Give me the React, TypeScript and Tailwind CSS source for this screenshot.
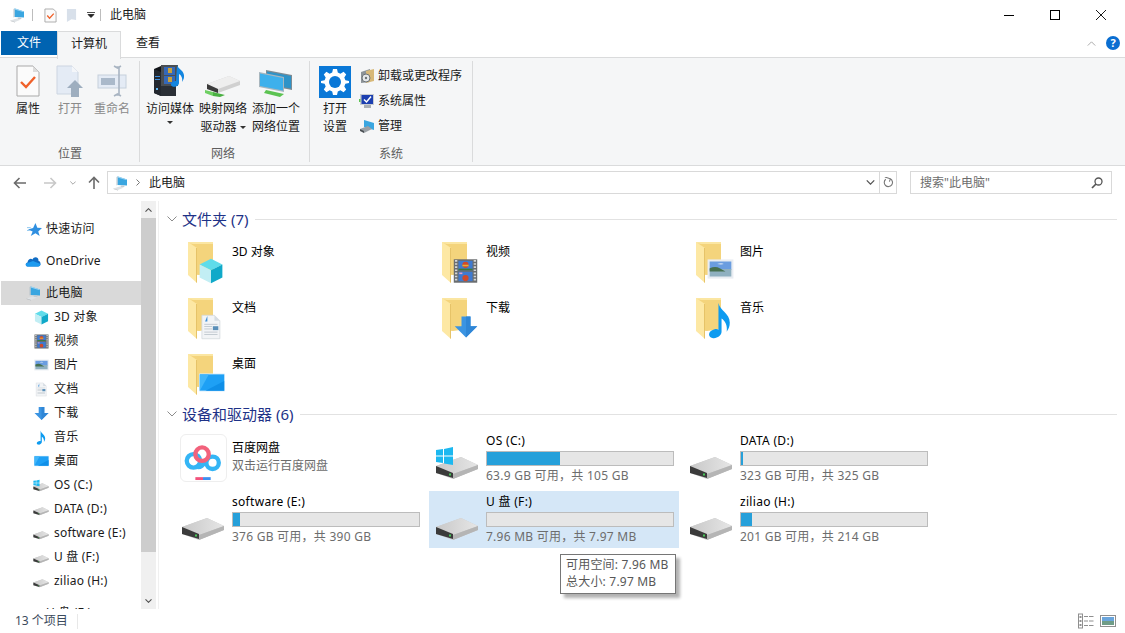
import React from 'react';

type P = React.SVGProps<SVGSVGElement>;

const FONT = "font-['Noto_Sans','Noto_Sans_CJK_SC',sans-serif]";

/* ---------- drawn icons ---------- */

const Computer = (p: P) => (
  <svg viewBox="0 0 32 32" {...p}>
    <path d="M9 3 L28 9 V21 L9 20 Z" fill="#3aa6e0" />
    <path d="M9 3 L11 3 L28 9 L26 10 L9 5 Z" fill="#9bd3f2" />
    <path d="M7 4 L9 3 V20 L7 21 Z" fill="#b8c4cc" />
    <path d="M16 21 L22 21 L23 24 L15 24 Z" fill="#c4ccd2" />
    <path d="M1 27 L13 23 L22 25 L10 30 Z" fill="#dfe3e6" />
    <path d="M1 27 L10 30 V31 L1 28 Z" fill="#aeb4b9" />
  </svg>
);

const Cube = (p: P) => (
  <svg viewBox="0 0 32 32" {...p}>
    <path d="M16 1 L30 8 L16 15 L2 8 Z" fill="#5fdcea" />
    <path d="M2 8 L16 15 V31 L2 24 Z" fill="#c2eef4" />
    <path d="M16 15 L30 8 V24 L16 31 Z" fill="#10a9c9" />
  </svg>
);

const Film = (p: P) => (
  <svg viewBox="0 0 32 32" {...p}>
    <rect x="1" y="1" width="30" height="30" fill="#6a6d6f" />
    <path d="M4 2 V30 M28 2 V30" stroke="#d4d6d8" strokeWidth="3" strokeDasharray="2 2" />
    <rect x="7" y="3" width="18" height="12" fill="#3f7ad0" />
    <rect x="7" y="17" width="18" height="12" fill="#3f7ad0" />
    <circle cx="16" cy="8" r="4" fill="#cf4a2a" />
    <rect x="12" y="8" width="8" height="2" fill="#e0b23a" />
    <rect x="7" y="13" width="18" height="2" fill="#3d7a3a" />
    <circle cx="16" cy="25" r="4" fill="#cf4a2a" />
    <rect x="8" y="18" width="4" height="2" fill="#e8a0c0" />
  </svg>
);

const Picture = (p: P) => (
  <svg viewBox="0 0 32 24" {...p}>
    <rect x="0.5" y="0.5" width="31" height="23" fill="#e9edf2" />
    <rect x="3" y="3" width="26" height="10" fill="#6a9de0" />
    <rect x="3" y="12" width="26" height="9" fill="#8fb0c0" />
    <path d="M3 11 Q10 8 15 11 L22 15 H3 Z" fill="#46704f" />
    <path d="M12 6 Q17 4 20 6 Q17 7 12 6" fill="#dfeaf7" />
  </svg>
);

const Doc = (p: P) => (
  <svg viewBox="0 0 32 32" {...p}>
    <path d="M5 1 H21 L28 8 V31 H5 Z" fill="#f2f4f6" stroke="#d4d8dc" />
    <path d="M21 1 V8 H28 Z" fill="#d6dde3" />
    <path d="M9 9 L12 2 V9 Z" fill="#3f8fd8" />
    <rect x="8" y="12" width="17" height="1" fill="#b8c0c8" />
    <rect x="8" y="15" width="10" height="1" fill="#b8c0c8" />
    <rect x="19" y="15" width="7" height="5" fill="#5a8fb8" />
    <rect x="8" y="18" width="10" height="1" fill="#b8c0c8" />
    <rect x="8" y="22" width="17" height="1" fill="#b8c0c8" />
    <rect x="8" y="25" width="17" height="1" fill="#b8c0c8" />
  </svg>
);

const Download = (p: P) => (
  <svg viewBox="0 0 32 32" {...p}>
    <path d="M10 2 H22 V15 H31 L16 30 L1 15 H10 Z" fill="#3b94e2" />
    <path d="M16 2 H22 V15 H31 L16 30 Z" fill="#2f86d6" />
  </svg>
);

const Music = (p: P) => (
  <svg viewBox="0 0 22 36" {...p}>
    <path d="M10 1 C11 8 21 11 21 20 C21 24 20 26 18 29 C19 22 16 18 13 16 V29 C13 33 8 36 4 35 C0 34 0 30 3 28 C6 26 9 26 10 27 Z" fill="#0d9bf0" />
  </svg>
);

const Desktop = (p: P) => (
  <svg viewBox="0 0 32 22" {...p}>
    <rect x="0" y="0" width="32" height="22" rx="1" fill="#d8eefc" />
    <rect x="1" y="1" width="30" height="20" fill="#1ea0f5" />
    <path d="M1 21 L12 1 H1 Z" fill="#41b6fa" />
    <path d="M8 21 L31 9 V21 Z" fill="#0f8fe8" />
  </svg>
);

const Star = (p: P) => (
  <svg viewBox="0 0 16 16" {...p}>
    <path d="M9 1 L11 6 L16 6.5 L12 10 L13.5 15 L9 12 L4 15 L6 10 L1 8 L6.5 6.5 Z" fill="#2f8fe0" />
    <path d="M0 6 H4 M0 9 H3" stroke="#8cc4ee" />
  </svg>
);

const Cloud = (p: P) => (
  <svg viewBox="0 0 16 11" {...p}>
    <path d="M3 10.5 C0.5 10.5 0 7 2.5 6.5 C3 3 6 2 7.5 3.5 C9 0 14 1 13.5 5 C16 5 16.5 10.5 13 10.5 Z" fill="#0f6cc4" />
    <path d="M3 10.5 C1 10.5 0 9 1 7.5 L8 5 L15.5 8 C15.5 9.5 14.5 10.5 13 10.5 Z" fill="#1d9bf0" />
  </svg>
);

const Folder = ({ children }: { children?: React.ReactNode }) => (
  <svg viewBox="0 0 40 44" className="w-[40px] h-[44px] shrink-0">
    <path d="M1 1 H26 V32 L12 34 L1 33 Z" fill="#f4d47c" />
    <path d="M1 1 H26 V3 H6 L1 2 Z" fill="#fbe6a2" />
    <path d="M1 1 L10 7 V42 L1 34 Z" fill="#fde8a4" />
    <path d="M10 7 V42 L9 41 V7 Z" fill="#e6c368" />
    {children}
  </svg>
);

const Drive = ({ win, className }: { win?: boolean; className?: string }) => (
  <svg viewBox="0 0 44 34" className={className}>
    <defs>
      <linearGradient id="dr" x1="0" y1="0" x2="1" y2="0">
        <stop offset="0" stopColor="#c8c8c8" />
        <stop offset="1" stopColor="#e6e6e6" />
      </linearGradient>
    </defs>
    <path d="M1 20 L26 11 L43 19 V23 L18 33 L1 27 Z" fill="#c9c9c9" />
    <path d="M1 20 L26 11 L43 19 L18 28 Z" fill="url(#dr)" />
    <path d="M1 20 L18 27 V32 L1 27 Z" fill="#3b3b3b" />
    <path d="M18 28 L43 19 V23 L18 33 Z" fill="#b5b5b5" />
    <rect x="14" y="27.5" width="2" height="2" fill="#46c957" />
    {win && (
      <g fill="#1cb8f0">
        <path d="M1 4 L8 3 V9.5 H1 Z" />
        <path d="M9 3 L18 1 V9.5 H9 Z" />
        <path d="M1 10.5 H8 V17 L1 16 Z" />
        <path d="M9 10.5 H18 V19 L9 17.5 Z" />
      </g>
    )}
  </svg>
);

const NetDrive = () => (
  <svg viewBox="0 0 36 24" className="w-[36px] h-[24px]">
    <path d="M2 11 L24 3 L35 8 V12 L13 20 L2 16 Z" fill="#d0d0d0" />
    <path d="M2 11 L24 3 L35 8 L13 16 Z" fill="#eeeeee" />
    <path d="M2 11 L13 16 V20 L2 16 Z" fill="#3a3a3a" />
    <path d="M0 17 L8 19 V23 L0 20 Z" fill="#6dcf62" />
    <path d="M8 19 L20 22 L15 24 L8 23 Z" fill="#4ab043" />
  </svg>
);

const NetPlace = () => (
  <svg viewBox="0 0 36 28" className="w-[36px] h-[28px]">
    <path d="M8 1 L34 6 V21 L8 16 Z" fill="#7d8b93" />
    <path d="M9 2.5 L33 7 V19.5 L9 15 Z" fill="#2e93c8" />
    <path d="M1 3 L26 8 V23 L1 18 Z" fill="#a8b6be" />
    <path d="M2 4.5 L25 9 V21.5 L2 17 Z" fill="#3db0ec" />
    <path d="M8 21 L26 25 L22 28 L6 24 Z" fill="#5cc352" />
  </svg>
);

const Media = () => (
  <svg viewBox="0 0 34 32" className="w-[34px] h-[32px]">
    <path d="M1 4 L8 1 L23 6 V31 H8 L1 28 Z" fill="#111418" />
    <path d="M1 4 L8 7 V31 L1 28 Z" fill="#23282f" />
    <path d="M8 7 L23 6 V31 H8 Z" fill="#2a2f36" />
    <rect x="2" y="11" width="5" height="1" fill="#3d8fe0" />
    <rect x="2" y="14" width="5" height="1" fill="#3d8fe0" />
    <rect x="3" y="23" width="2" height="2" fill="#5fb7f5" />
    <rect x="8" y="0" width="17" height="21" fill="#4a4e52" />
    <rect x="11" y="2" width="11" height="8" fill="#3568b8" />
    <rect x="11" y="11" width="11" height="8" fill="#3568b8" />
    <rect x="15" y="3" width="4" height="5" fill="#c9a13a" />
    <rect x="15" y="12" width="4" height="5" fill="#c9a13a" />
    <path d="M24 0 C25 4 32 6 31 12 C31 14 30 15 29 17 C30 13 28 10 26 9 V18 C26 22 19 23 18 20 C18 17 21 16 23 16 Z" fill="#1386e0" />
  </svg>
);

const PropPage = () => (
  <svg viewBox="0 0 24 32" className="w-[24px] h-[32px]">
    <path d="M1 1 H17 L23 7 V31 H1 Z" fill="#fbfbfb" stroke="#a9a9a9" />
    <path d="M17 1 V7 H23 Z" fill="#dcdcdc" />
    <path d="M5 17 L10 22 L19 12" fill="none" stroke="#f0612a" strokeWidth="2.4" />
  </svg>
);

const OpenPage = () => (
  <svg viewBox="0 0 28 32" className="w-[28px] h-[32px]">
    <path d="M1 1 H16 L22 7 V29 H1 Z" fill="#e4ebf5" stroke="#ccd5e1" />
    <path d="M16 1 V7 H22 Z" fill="#f4f6f9" />
    <path d="M19 15 L27 23 H23 V32 H15 V23 H11 Z" fill="#9eaebf" />
  </svg>
);

const Rename = () => (
  <svg viewBox="0 0 30 32" className="w-[30px] h-[32px]">
    <rect x="1" y="10" width="28" height="13" fill="#e4ebf5" stroke="#c6d0dc" />
    <rect x="4" y="13" width="14" height="7" fill="#aab9ca" />
    <path d="M19 2 H22 V30 H19 M17 1 L20.5 3 L24 1 M17 31 L20.5 29 L24 31" fill="none" stroke="#a8b4c2" strokeWidth="1.6" />
  </svg>
);

const Gear = () => (
  <svg viewBox="0 0 32 32" className="w-[32px] h-[32px]">
    <rect width="32" height="32" fill="#0a78d7" />
    <path
      d="M14 4 H18 L18.8 7.6 L21.4 8.7 L24.6 6.8 L27.2 9.4 L25.3 12.6 L26.4 15.2 L30 16 V18 L26.4 18.8 L25.3 21.4 L27.2 24.6 L24.6 27.2 L21.4 25.3 L18.8 26.4 L18 30 H14 L13.2 26.4 L10.6 25.3 L7.4 27.2 L4.8 24.6 L6.7 21.4 L5.6 18.8 L2 18 V16 L5.6 15.2 L6.7 12.6 L4.8 9.4 L7.4 6.8 L10.6 8.7 L13.2 7.6 Z"
      fill="#fff"
      transform="translate(0 -1)"
    />
    <circle cx="16" cy="16" r="6" fill="#0a78d7" />
  </svg>
);

const Uninstall = () => (
  <svg viewBox="0 0 16 16" className="w-[16px] h-[16px]">
    <path d="M2 4 L11 1 V14 L2 15 Z" fill="#8d9499" />
    <path d="M7 3 L15 1 V13 L7 15 Z" fill="#d7b878" />
    <circle cx="7" cy="10" r="4" fill="#e5e8ea" stroke="#6d7377" />
    <circle cx="7" cy="10" r="1.2" fill="#6d7377" />
  </svg>
);

const SysProp = () => (
  <svg viewBox="0 0 16 16" className="w-[16px] h-[16px]">
    <rect x="1" y="1" width="14" height="11" fill="#c8ccd0" />
    <rect x="2.5" y="2" width="11.5" height="9" fill="#1c3fb0" />
    <path d="M5 6.5 L7.5 9 L12 3.5" fill="none" stroke="#fff" strokeWidth="1.5" />
    <rect x="5" y="12" width="7" height="3" fill="#a9afb4" />
    <rect x="0" y="6" width="1.5" height="3" fill="#5cc352" />
  </svg>
);

const Manage = () => (
  <svg viewBox="0 0 16 16" className="w-[16px] h-[16px]">
    <path d="M5 2 L15 5 V12 L5 9 Z" fill="#3aa6e0" />
    <path d="M1 11 L9 8 L13 11 L5 15 Z" fill="#9aa0a5" />
    <path d="M1 11 L5 13 V15 L1 13 Z" fill="#4a4f54" />
  </svg>
);

/* small line icons */
const Chevron = ({ up, className, sw = 1 }: { up?: boolean; className?: string; sw?: number }) => (
  <svg viewBox="0 0 10 6" className={className} fill="none" stroke="currentColor" strokeWidth={sw}>
    <path d={up ? 'M0.5 5.5 L5 1 L9.5 5.5' : 'M0.5 0.5 L5 5 L9.5 0.5'} />
  </svg>
);

const Arrow = ({ d, className }: { d: string; className?: string }) => (
  <svg viewBox="0 0 14 14" className={className} fill="none" stroke="currentColor" strokeWidth="1.6">
    <path d={d} />
  </svg>
);

const Baidu = () => (
  <div className="w-[47px] h-[48px] rounded-[6px] border border-[#eeeeee] bg-white shrink-0">
    <svg viewBox="0 0 47 48" className="w-[45px] h-[46px]">
      <circle cx="13" cy="27" r="7" fill="none" stroke="#34b5f5" strokeWidth="4.5" />
      <circle cx="33" cy="29" r="6.5" fill="none" stroke="#34b5f5" strokeWidth="4.5" />
      <path d="M16 33 C22 36 26 26 29 24" fill="none" stroke="#34b5f5" strokeWidth="4.5" />
      <circle cx="22" cy="20" r="7" fill="none" stroke="#f2627c" strokeWidth="4.5" />
      <rect x="15" y="44" width="8" height="3" fill="#f2527c" />
      <rect x="23" y="44" width="8" height="3" fill="#3b8ff0" />
    </svg>
  </div>
);

/* ---------- ribbon ---------- */

const RibbonBtn = ({
  icon,
  lines,
  width,
  gray,
}: {
  icon: React.ReactNode;
  lines: React.ReactNode[];
  width: string;
  gray?: boolean;
}) => (
  <div className={`flex flex-col items-center ${width} ${gray ? 'text-[#8a8a8a]' : 'text-[#1a1a1a]'}`}>
    <div className="h-[39px] pb-[3px] flex items-end justify-center">{icon}</div>
    {lines.map((l, i) => (
      <div key={i} className="h-[18px] leading-[18px] whitespace-nowrap">
        {l}
      </div>
    ))}
  </div>
);

const Group = ({
  label,
  width,
  children,
  shift = '',
}: {
  label: string;
  width: string;
  children: React.ReactNode;
  shift?: string;
}) => (
  <div className={`${width} h-[101px] mt-[3px] flex flex-col border-r border-[#dadbdc]`}>
    <div className={`flex-1 flex justify-center ${shift}`}>{children}</div>
    <div className={`h-[16px] leading-[16px] text-center text-[#5e5e5e] ${shift}`}>{label}</div>
  </div>
);

const SysRow = ({ icon, text }: { icon: React.ReactNode; text: string }) => (
  <div className="flex items-center gap-[3px] h-[25px] text-[#1a1a1a] whitespace-nowrap">
    {icon}
    <span>{text}</span>
  </div>
);

/* ---------- sidebar ---------- */

const SideRow = ({
  icon,
  text,
  child,
  active,
}: {
  icon: React.ReactNode;
  text: string;
  child?: boolean;
  active?: boolean;
}) => (
  <div
    className={`flex items-center h-[24px] shrink-0 whitespace-nowrap ${child ? 'pl-[32px]' : 'pl-[25px]'} ${
      active ? 'bg-[#d9d9d9]' : ''
    }`}
  >
    <div className="w-[16px] h-[16px] flex items-center justify-center shrink-0">{icon}</div>
    <span className={`tracking-[0.2px] ${child ? 'ml-[5px]' : 'ml-[4px]'}`}>{text}</span>
  </div>
);

/* ---------- content ---------- */

const SectionHead = ({ title, mb }: { title: string; mb: string }) => (
  <div className={`flex items-center h-[20px] ${mb}`}>
    <Chevron className="w-[10px] h-[6px] ml-[7px] text-[#8c8c8c]" />
    <span className="ml-[5px] text-[15px] leading-[20px] text-[#1e3287] whitespace-nowrap">{title}</span>
    <div className="flex-1 h-px bg-[#e2e2e2] ml-[7px]" />
  </div>
);

const FolderTile = ({ name, children }: { name: string; children?: React.ReactNode }) => (
  <div className="flex w-[250px] h-[56px] pl-[12px] pt-[5px]">
    <Folder>{children}</Folder>
    <span className="ml-[5px] mt-[3px] h-[16px] leading-[16px] text-black">{name}</span>
  </div>
);

const DriveTile = ({
  name,
  used,
  info,
  win,
  selected,
}: {
  name: string;
  used: number;
  info: string;
  win?: boolean;
  selected?: boolean;
}) => (
  <div className={`flex items-end w-[250px] h-[57px] ${selected ? 'bg-[#d5e7f7]' : ''}`}>
    <Drive win={win} className="w-[44px] h-[34px] ml-[6px] mb-[7px] shrink-0" />
    <div className="ml-[7px] w-[188px] self-start pt-[3px]">
      <div className="h-[16px] leading-[16px] text-black tracking-[0.3px]">{name}</div>
      <div className="mt-[2px] h-[15px] bg-[#e6e6e6] border border-[#bcbcbc]">
        <div className="h-full bg-[#26a0da]" style={{ width: `${used}%` }} />
      </div>
      <div className="mt-[2px] h-[16px] leading-[16px] text-[#6d6d6d] tracking-[0.25px]">{info}</div>
    </div>
  </div>
);

export default function App() {
  return (
    <div className={`w-[1125px] h-[633px] bg-white overflow-hidden flex flex-col text-[12px] ${FONT}`}>
      {/* Title bar */}
      <div className="h-[30px] flex items-center shrink-0">
        <Computer className="w-[16px] h-[16px] ml-[10px]" />
        <div className="w-px h-[12px] bg-[#bdbdbd] ml-[6px]" />
        <svg viewBox="0 0 14 16" className="w-[13px] h-[15px] ml-[11px]">
          <path d="M1 1 H10 L13 4 V15 H1 Z" fill="#fbfbfb" stroke="#a9a9a9" />
          <path d="M3.5 8 L6 11 L10.5 6" fill="none" stroke="#f0612a" strokeWidth="1.4" />
        </svg>
        <svg viewBox="0 0 12 16" className="w-[11px] h-[15px] ml-[9px]">
          <path d="M1 1 H11 V13 L6 12 L1 15 Z" fill="#d8e0ea" />
        </svg>
        <svg viewBox="0 0 8 6" className="w-[8px] h-[6px] ml-[10px]">
          <path d="M0 0.5 H8 M1 2.5 H7 L4 5.5 Z" stroke="#222" strokeWidth="0.8" fill="#222" />
        </svg>
        <div className="w-px h-[12px] bg-[#bdbdbd] ml-[5px]" />
        <span className="ml-[9px] text-[#1a1a1a]">此电脑</span>
        <div className="ml-auto flex pr-px">
          <div className="w-[46px] h-[30px] flex items-center justify-center">
            <div className="w-[10px] h-px bg-black" />
          </div>
          <div className="w-[46px] h-[30px] flex items-center justify-center">
            <div className="w-[10px] h-[10px] border border-black" />
          </div>
          <div className="w-[46px] h-[30px] flex items-center justify-center">
            <svg viewBox="0 0 10 10" className="w-[10px] h-[10px]">
              <path d="M0 0 L10 10 M10 0 L0 10" stroke="#000" strokeWidth="0.9" />
            </svg>
          </div>
        </div>
      </div>

      {/* Tabs */}
      <div className="h-[27px] flex items-start shrink-0 relative z-10">
        <div className="ml-px w-[56px] h-[24px] mt-px bg-[#0063b1] text-white flex items-center justify-center">文件</div>
        <div className="w-[64px] h-[28px] mt-px bg-[#f5f6f7] border border-b-0 border-[#dadbdc] flex items-center justify-center text-[#1a1a1a] pb-[4px]">
          计算机
        </div>
        <div className="w-[54px] h-[24px] mt-px flex items-center justify-center text-[#1a1a1a]">查看</div>
        <Chevron up className="w-[9px] h-[5px] ml-auto mt-[11px] text-[#9a9a9a]" />
        <div className="w-[14px] h-[14px] ml-[10px] mr-[5px] mt-[6px] rounded-full bg-[#0a6ed1] text-white text-[11px] leading-[14px] font-bold text-center">
          ?
        </div>
      </div>

      {/* Ribbon */}
      <div className="h-[109px] bg-[#f5f6f7] border-y border-[#dadbdc] flex shrink-0 pl-px text-[12px]">
        <Group label="位置" width="w-[139px]">
          <RibbonBtn width="w-[42px]" icon={<PropPage />} lines={['属性']} />
          <RibbonBtn width="w-[42px]" gray icon={<OpenPage />} lines={['打开']} />
          <RibbonBtn width="w-[42px]" gray icon={<Rename />} lines={['重命名']} />
        </Group>
        <Group label="网络" width="w-[170px]" shift="pr-[3px]">
          <RibbonBtn
            width="w-[53px]"
            icon={<Media />}
            lines={[
              '访问媒体',
              <svg key="c" viewBox="0 0 6 3" className="w-[6px] h-[3px] mt-[3px]">
                <path d="M0 0 H6 L3 3 Z" fill="#333" />
              </svg>,
            ]}
          />
          <RibbonBtn
            width="w-[53px]"
            icon={<NetDrive />}
            lines={[
              '映射网络',
              <span key="d" className="flex items-center gap-[3px]">
                驱动器
                <svg viewBox="0 0 6 3" className="w-[6px] h-[3px]">
                  <path d="M0 0 H6 L3 3 Z" fill="#333" />
                </svg>
              </span>,
            ]}
          />
          <RibbonBtn width="w-[53px]" icon={<NetPlace />} lines={['添加一个', '网络位置']} />
        </Group>
        <Group label="系统" width="w-[163px]">
          <div className="flex w-full pl-[9px] pt-[5px]">
            <div className="flex flex-col items-center w-[32px] text-[#1a1a1a]">
              <Gear />
              <div className="h-[18px] leading-[18px] mt-[2px] whitespace-nowrap">打开</div>
              <div className="h-[18px] leading-[18px] whitespace-nowrap">设置</div>
            </div>
            <div className="ml-[8px] -mt-[3px] flex flex-col">
              <SysRow icon={<Uninstall />} text="卸载或更改程序" />
              <SysRow icon={<SysProp />} text="系统属性" />
              <SysRow icon={<Manage />} text="管理" />
            </div>
          </div>
        </Group>
      </div>

      {/* Address bar */}
      <div className="h-[35px] pb-[2px] flex items-center shrink-0 relative">
        <Arrow d="M13 7 H1.5 M6.5 2 L1.5 7 L6.5 12" className="w-[14px] h-[14px] ml-[13px] text-[#6b6b6b]" />
        <Arrow d="M1 7 H12.5 M7.5 2 L12.5 7 L7.5 12" className="w-[14px] h-[14px] ml-[16px] text-[#c8c8c8]" />
        <Chevron className="w-[6px] h-[4px] ml-[13px] text-[#6b6b6b]" />
        <Arrow d="M7 13 V1.5 M2 6.5 L7 1.5 L12 6.5" className="w-[14px] h-[14px] ml-[11px] text-[#6b6b6b]" />
        <div className="ml-[6px] w-[790px] h-[23px] border border-[#d9d9d9] flex items-center">
          <Computer className="w-[16px] h-[16px] ml-[5px]" />
          <svg viewBox="0 0 4 7" className="w-[4px] h-[7px] ml-[7px] text-[#777]" fill="none" stroke="currentColor">
            <path d="M0.5 0.5 L3.5 3.5 L0.5 6.5" />
          </svg>
          <span className="ml-[9px] text-[#1a1a1a]">此电脑</span>
          <Chevron sw={1.5} className="w-[9px] h-[5px] ml-auto mr-[3px] text-[#555]" />
          <div className="w-px h-full bg-[#d9d9d9] ml-[1px]" />
          <svg viewBox="0 0 12 12" className="w-[11px] h-[11px] mx-[2.5px] text-[#777]" fill="none" stroke="currentColor" strokeWidth="1.2">
            <path d="M3 2.5 A4.5 4.5 0 1 0 8 2 M2 0 L8 2 L7 5" />
          </svg>
        </div>
        <div className="ml-[13px] w-[202px] h-[23px] border border-[#d9d9d9] flex items-center text-[#6d6d6d]">
          <span className="ml-[9px]">搜索"此电脑"</span>
          <svg viewBox="0 0 12 12" className="w-[12px] h-[12px] ml-auto mr-[8px] text-[#555]" fill="none" stroke="currentColor" strokeWidth="1.3">
            <circle cx="7.5" cy="4.5" r="3.5" />
            <path d="M5 7 L1 11" strokeWidth="1.7" />
          </svg>
        </div>
      </div>

      {/* Main */}
      <div className="flex-1 min-h-0 flex">
        {/* Nav pane */}
        <div className="w-[159px] shrink-0 flex border-r border-[#f0f0f0] pl-px text-[#1a1a1a]">
          <div className="w-[140px] flex flex-col overflow-hidden pt-[16px]">
            <SideRow icon={<Star className="w-[15px] h-[15px]" />} text="快速访问" />
            <div className="h-[8px] shrink-0" />
            <div className="flex items-center h-[24px] shrink-0 pl-[25px]">
              <Cloud className="w-[16px] h-[11px] -ml-px" />
              <span className="ml-[5px] tracking-[0.2px]">OneDrive</span>
            </div>
            <div className="h-[8px] shrink-0" />
            <SideRow active icon={<Computer className="w-[16px] h-[16px]" />} text="此电脑" />
            <SideRow child icon={<Cube className="w-[15px] h-[15px]" />} text="3D 对象" />
            <SideRow child icon={<Film className="w-[15px] h-[15px]" />} text="视频" />
            <SideRow child icon={<Picture className="w-[15px] h-[12px]" />} text="图片" />
            <SideRow child icon={<Doc className="w-[14px] h-[15px]" />} text="文档" />
            <SideRow child icon={<Download className="w-[15px] h-[15px]" />} text="下载" />
            <SideRow child icon={<Music className="w-[10px] h-[15px]" />} text="音乐" />
            <SideRow child icon={<Desktop className="w-[15px] h-[12px]" />} text="桌面" />
            <SideRow child icon={<Drive win className="w-[16px] h-[13px]" />} text="OS (C:)" />
            <SideRow child icon={<Drive className="w-[16px] h-[13px]" />} text="DATA (D:)" />
            <SideRow child icon={<Drive className="w-[16px] h-[13px]" />} text="software (E:)" />
            <SideRow child icon={<Drive className="w-[16px] h-[13px]" />} text="U 盘 (F:)" />
            <SideRow child icon={<Drive className="w-[16px] h-[13px]" />} text="ziliao (H:)" />
            <div className="h-[8px] shrink-0" />
            <SideRow icon={<Drive className="w-[16px] h-[13px]" />} text="U 盘 (F:)" />
          </div>
          <div className="w-[15px] flex flex-col bg-[#f0f0f0]">
            <div className="h-[17px] flex items-center justify-center">
              <Chevron up sw={1.6} className="w-[7px] h-[4px] text-[#505050]" />
            </div>
            <div className="h-[334px] bg-[#cdcdcd]" />
            <div className="flex-1" />
            <div className="h-[17px] flex items-center justify-center">
              <Chevron sw={1.6} className="w-[7px] h-[4px] text-[#505050]" />
            </div>
          </div>
        </div>

        {/* Content */}
        <div className="flex-1 pr-[8px] pt-[8px] pl-px relative">
          <SectionHead title="文件夹 (7)" mb="mb-[7px]" />
          <div className="grid grid-cols-[254px_254px_254px] pl-[15px]">
            <FolderTile name="3D 对象">
              <Cube x={11} y={17} width={26} height={26} />
            </FolderTile>
            <FolderTile name="视频">
              <Film x={12} y={17} width={25} height={26} />
            </FolderTile>
            <FolderTile name="图片">
              <Picture x={12} y={18} width={27} height={20} />
            </FolderTile>
            <FolderTile name="文档">
              <Doc x={11} y={16} width={25} height={28} />
            </FolderTile>
            <FolderTile name="下载">
              <Download x={13} y={18} width={24} height={24} />
            </FolderTile>
            <FolderTile name="音乐">
              <Music x={13} y={5} width={23} height={37} />
            </FolderTile>
            <FolderTile name="桌面">
              <Desktop x={12} y={20} width={26} height={19} />
            </FolderTile>
          </div>

          <SectionHead title="设备和驱动器 (6)" mb="mb-[6px]" />
          <div className="grid grid-cols-[254px_254px_254px] gap-y-[4px] pl-[15px]">
            <div className="flex w-[250px] h-[57px] pl-[5px] pt-[4px]">
              <Baidu />
              <div className="ml-[5px] pt-[5px]">
                <div className="h-[18px] leading-[18px] text-black">百度网盘</div>
                <div className="h-[18px] leading-[18px] text-[#6d6d6d]">双击运行百度网盘</div>
              </div>
            </div>
            <DriveTile win name="OS (C:)" used={39} info="63.9 GB 可用，共 105 GB" />
            <DriveTile name="DATA (D:)" used={1} info="323 GB 可用，共 325 GB" />
            <DriveTile name="software (E:)" used={4} info="376 GB 可用，共 390 GB" />
            <DriveTile selected name="U 盘 (F:)" used={0} info="7.96 MB 可用，共 7.97 MB" />
            <DriveTile name="ziliao (H:)" used={6} info="201 GB 可用，共 214 GB" />
          </div>

          {/* Tooltip */}
          <div className="absolute left-[401px] top-[353px] w-[116px] h-[40px] bg-white border border-[#767676] shadow-[4px_4px_3px_rgba(0,0,0,0.3)] pl-[5px] pt-[1px] text-[#575757] leading-[17px] whitespace-nowrap tracking-[0.2px]">
            <div>可用空间: 7.96 MB</div>
            <div>总大小: 7.97 MB</div>
          </div>
        </div>
      </div>

      {/* Status bar */}
      <div className="h-[24px] shrink-0 flex items-center bg-white relative">
        <span className="ml-[15px] text-[#3b4a5c]">13 个项目</span>
        <div className="w-px h-[15px] bg-[#e8e8e8] ml-[9px]" />
        <div className="ml-auto flex items-center gap-[6px] mr-[9px]">
          <svg viewBox="0 0 16 16" className="w-[16px] h-[16px]">
            <rect x="0.5" y="1" width="4" height="14" fill="#fff" stroke="#8f8f8f" />
            <rect x="1.5" y="3" width="2" height="2" fill="#8f8f8f" />
            <rect x="1.5" y="7" width="2" height="2" fill="#8f8f8f" />
            <rect x="1.5" y="11" width="2" height="2" fill="#8f8f8f" />
            <path d="M6 3.5 H10 M11 3.5 H15.5 M6 8 H10 M11 8 H15.5 M6 12.5 H10 M11 12.5 H15.5" stroke="#8f8f8f" />
          </svg>
          <svg viewBox="0 0 16 12" className="w-[16px] h-[12px]">
            <rect x="0.5" y="0.5" width="15" height="11" fill="#fff" stroke="#8f8f8f" />
            <rect x="2" y="2" width="12" height="4" fill="#6aa5dc" />
            <rect x="2" y="6" width="12" height="4" fill="#6f9c87" />
          </svg>
        </div>
      </div>
    </div>
  );
}
